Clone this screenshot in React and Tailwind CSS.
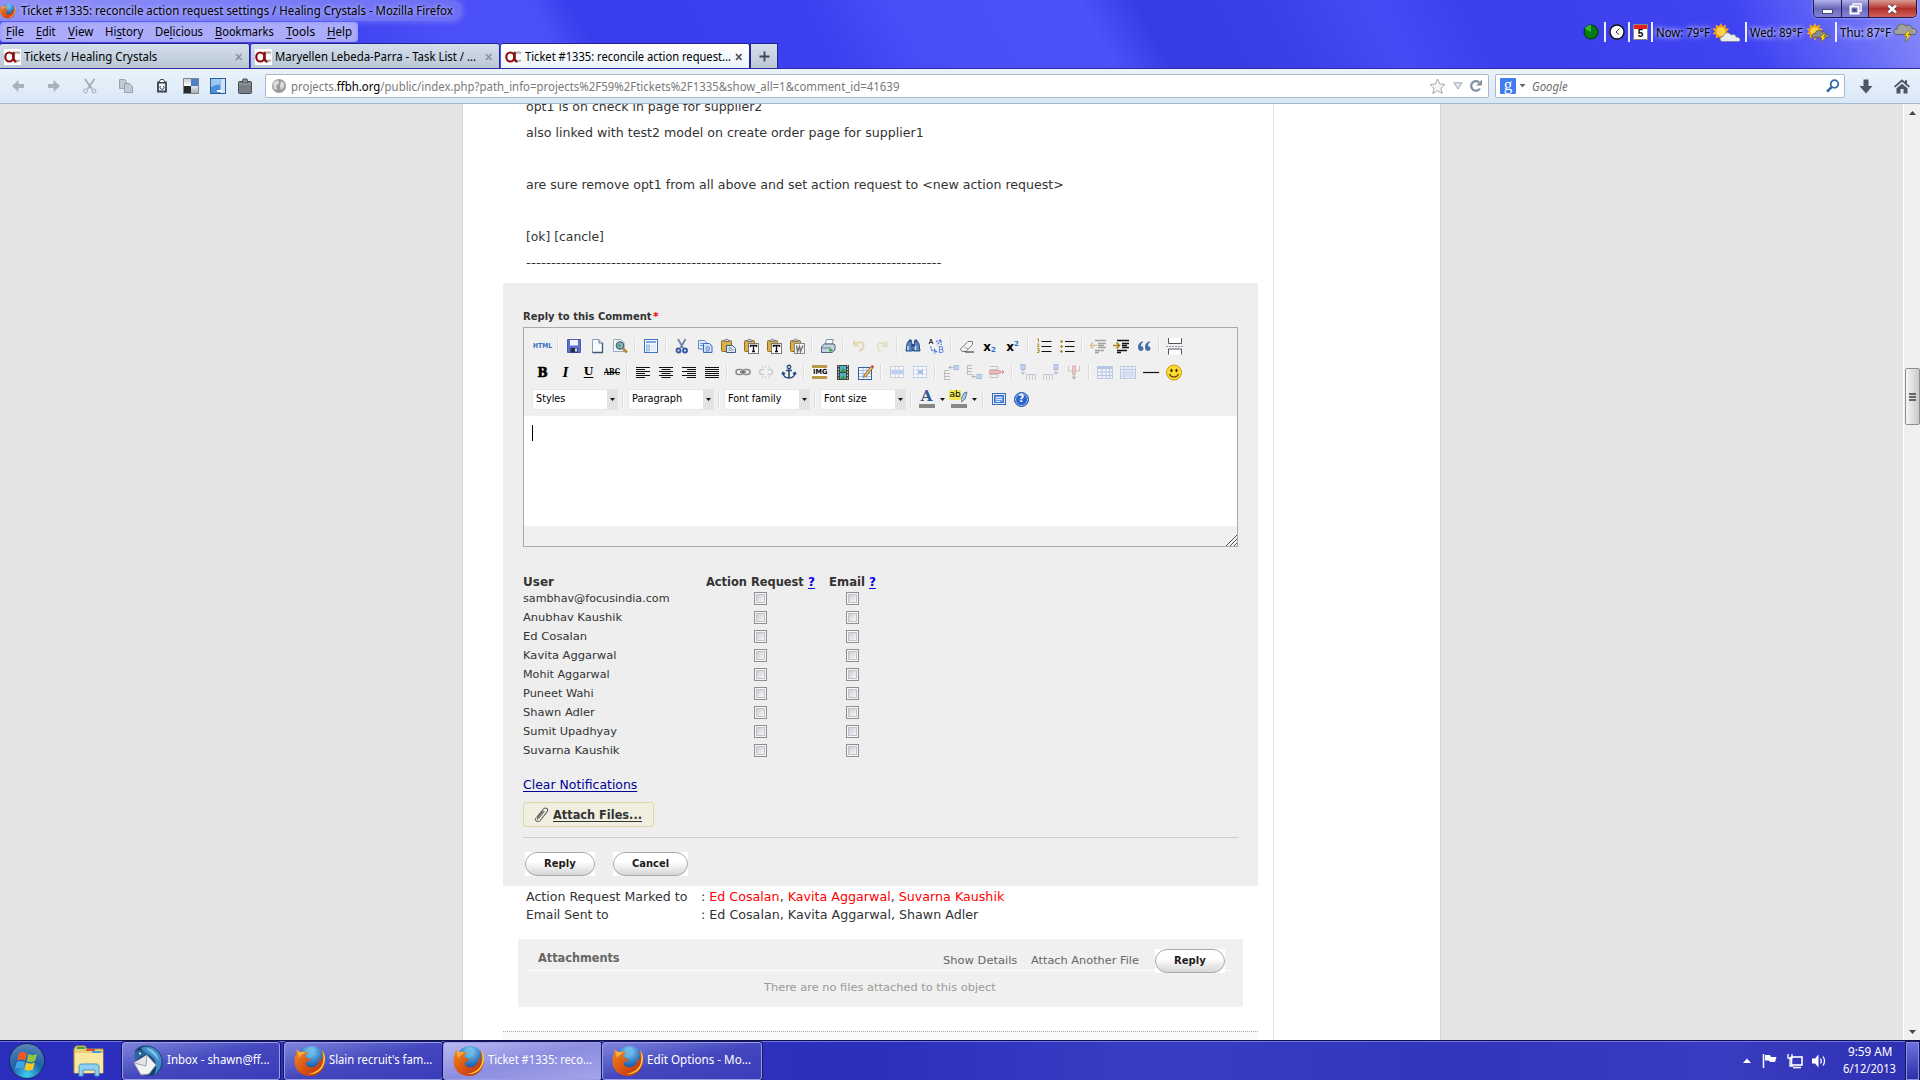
import { useLayoutEffect, useRef, useState } from "react";

// Text squeezed or stretched horizontally to fill the width its class gives.
function Fit({ className = "", inner: innerClass = "", children }) {
  const outer = useRef(null);
  const inner = useRef(null);
  const [scale, setScale] = useState(1);
  useLayoutEffect(() => {
    setScale(outer.current.clientWidth / inner.current.offsetWidth);
  }, []);
  return (
    <span ref={outer} className={"inline-block shrink-0 whitespace-nowrap " + className}>
      <span ref={inner} className={"inline-block origin-left " + innerClass} style={{ transform: `scaleX(${scale})` }}>
        {children}
      </span>
    </span>
  );
}

const SEGOE = "font-['Noto_Sans','Open_Sans',sans-serif]";
const VERDANA = "font-['DejaVu_Sans',sans-serif]";

function Svg({ w = 16, h = 16, className = "", children }) {
  return (
    <svg width={w} height={h} viewBox={`0 0 ${w} ${h}`} className={"shrink-0 " + className} fill="none">
      {children}
    </svg>
  );
}

function FirefoxIcon({ size }) {
  return (
    <svg width={size} height={size} viewBox="0 0 32 32" className="shrink-0">
      <defs>
        <radialGradient id="ffGlobe" cx="0.5" cy="0.2" r="0.8">
          <stop offset="0" stopColor="#8fd3f5" />
          <stop offset="0.5" stopColor="#2f7fc8" />
          <stop offset="1" stopColor="#12306e" />
        </radialGradient>
        <linearGradient id="ffFox" x1="0" y1="0" x2="1" y2="1">
          <stop offset="0" stopColor="#f08a24" />
          <stop offset="0.5" stopColor="#dc5414" />
          <stop offset="1" stopColor="#b5300f" />
        </linearGradient>
      </defs>
      <circle cx="17" cy="14.5" r="13.500" fill="url(#ffGlobe)" />
      <path d="M14 5c3-1 5 0 6 2l-3 2 1 3-4 1z" fill="#5fb4e4" opacity=".8" />
      <path d="M3 4c1 2 2 3 4 3 3-1 6 0 7 1-2 1-3 2-3 4l5 2c0 2-2 3-4 3-1 4 3 6 7 5 5-1 7-5 6-10 2 2 2 4 2 5 2-4 1-9-1-12 6 5 6 14 2 20-4 6-13 8-20 4C0 25-1 15 2 9z" fill="url(#ffFox)" />
      <path d="M28 5c3 4 4 9 2 14-2 7-9 11-16 10 8-1 14-6 15-12 1-4 0-9-1-12z" fill="#fbd13c" />
      <path d="M3 4c1 2 2 3 4 3 2 0 4 0 6 1-3 0-6 2-8 5z" fill="#fbb040" />
    </svg>
  );
}

function OcIcon() {
  return (
    <span className="flex h-[16px] w-[17px] shrink-0 items-center bg-white">
      <svg width="17" height="12" viewBox="0 0 17 12" fill="none">
        <path d="M16 2.300C13 .3 9.300 2 9.300 5.500c0 4 3.500 5.800 6.700 3.700" stroke="#b5afaf" strokeWidth="2.200" />
        <path d="M9.600 .8V7.500c0 2 1 3.200 2.800 3.200" stroke="#8e1010" strokeWidth="2.200" />
        <ellipse cx="5.300" cy="6" rx="4" ry="4.500" stroke="#8e1010" strokeWidth="2.200" />
      </svg>
    </span>
  );
}

function WindowButtons() {
  return (
    <div className="mr-[3px] flex h-[18px] w-[104px] overflow-hidden rounded-b-[5px] border border-t-0 border-[#1a1c55] shadow-[0_0_2px_#ffffffaa]">
      <div className="flex w-[28px] items-center justify-center border-r border-[#1a1c55] bg-linear-to-b from-[#b4b2ea] via-[#6a68b8] to-[#8482d8]">
        <Svg w={13} h={14}><rect x="1.500" y="7.500" width="10" height="4" fill="#fff" stroke="#444a7a" /></Svg>
      </div>
      <div className="flex w-[27px] items-center justify-center border-r border-[#1a1c55] bg-linear-to-b from-[#b4b2ea] via-[#6a68b8] to-[#8482d8]">
        <Svg w={13} h={14}>
          <rect x="4" y="2" width="8" height="7" fill="#6a68b8" stroke="#fff" strokeWidth="1.500" />
          <rect x="1.500" y="4.500" width="8" height="7" fill="#6a68b8" stroke="#fff" strokeWidth="2" />
          <rect x="4.500" y="7" width="2" height="2" fill="#333a6a" />
        </Svg>
      </div>
      <div className="flex flex-1 items-center justify-center bg-linear-to-b from-[#d99a96] via-[#b5302a] to-[#d0605a]">
        <Svg w={13} h={14}>
          <path d="M2.500 3.500l7.500 7M10 3.500l-7.500 7" stroke="#54343f" strokeWidth="4.200" />
          <path d="M2.500 3.500l7.500 7M10 3.500l-7.500 7" stroke="#fff" strokeWidth="2.600" />
        </Svg>
      </div>
    </div>
  );
}

function Sun() {
  return (
    <>
      <path d="M9 0l1.500 3.300L14 1.500l-.7 3.800 3.900.4-2.600 2.800 2.900 2.400-3.700.9 1 3.700-3.600-1.400L9 17.500l-2-3.400-3.500 1.500.7-3.800L.5 11l2.700-2.600L.3 5.500l3.900-.3L3.500 1.500 7 3.300z" fill="#f9a51a" />
      <circle cx="9" cy="8.500" r="5" fill="#fdd640" stroke="#f07d10" strokeWidth=".8" />
    </>
  );
}

function Forecast() {
  const bar = "mx-[3px] h-[20px] w-[2px] bg-white/90";
  const glow = "mt-[1px] text-[12px] text-black [text-shadow:0_0_5px_#fff,0_0_8px_#ffffffaa]";
  return (
    <div className="mr-[2px] flex h-[20px] items-center">
      <Svg w={16} h={16} className="mr-[2px]">
        <circle cx="8" cy="8" r="7.300" fill="#087a12" />
        <circle cx="8" cy="8" r="7" stroke="#022f06" />
        <path d="M8 8V1a7 7 0 0 0-6 4z" fill="#35b83d" />
      </Svg>
      <span className={bar} />
      <Svg w={16} h={16}>
        <circle cx="8" cy="8" r="7" fill="#fff" stroke="#111" strokeWidth="1.400" />
        <path d="M10.500 4.500L7 8l3 2.500" stroke="#333" />
      </Svg>
      <span className={bar} />
      <span className="flex h-[16px] w-[15px] flex-col border border-[#888] bg-white">
        <span className="h-[4px] bg-[#e3201b]" />
        <span className="text-center text-[10px] leading-[10px] font-bold font-['Liberation_Sans',sans-serif]">5</span>
      </span>
      <span className="mr-[3px] ml-[3px] h-[20px] w-[2px] bg-white/90" />
      <Fit className={"w-[54px] " + glow}>Now: 79°F</Fit>
      <Svg w={29} h={19} className="ml-[2px]">
        <Sun />
        <path d="M10 18.500c-3-1-2-5 1-5 1-4 6-5 8-1.500 3-1.500 5 .5 5 2 4 0 5 3 3 4.500z" fill="#e8ebef" stroke="#7b8088" strokeWidth=".8" />
      </Svg>
      <span className="mr-[3px] ml-[4px] h-[20px] w-[2px] bg-white/90" />
      <Fit className={"w-[53px] " + glow}>Wed: 89°F</Fit>
      <Svg w={25} h={19} className="ml-[3px]">
        <Sun />
        <path d="M7 14.500c-2-1-1-4 2-4 1-4 6-4 7-1.500 3-1 4 .5 4 2 4 0 4.500 2.500 2.500 3.500z" fill="#8b8b8b" stroke="#4c4c4c" strokeWidth=".8" />
        <path d="M17 11l-3 4h2l-1 4 5-5h-2.500l2-3z" fill="#ffe21f" stroke="#7c6500" strokeWidth=".6" />
      </Svg>
      <span className="mr-[3px] ml-[4px] h-[20px] w-[2px] bg-white/90" />
      <Fit className={"w-[51px] " + glow}>Thu: 87°F</Fit>
      <Svg w={25} h={19} className="ml-[2px]">
        <path d="M3 11.500C0 10.500 0 6 4 6c0-5 6-6.500 9-3 3-2 6 0 6 2.500 5-.5 6 4.500 3 6z" fill="#a0a0a0" stroke="#5a5a5a" strokeWidth=".9" />
        <path d="M15 8l-4 5h3l-2 6 6-7h-3l2.500-4z" fill="#ffe21f" stroke="#7c6500" strokeWidth=".6" />
      </Svg>
    </div>
  );
}

const MENU = [
  ["", "F", "ile", "w-[18px]"],
  ["", "E", "dit", "w-[20px]"],
  ["", "V", "iew", "w-[25px]"],
  ["Hi", "s", "tory", "w-[38px]"],
  ["De", "l", "icious", "w-[48px]"],
  ["", "B", "ookmarks", "w-[59px]"],
  ["", "T", "ools", "w-[29px]"],
  ["", "H", "elp", "w-[25px]"],
];

function Tab({ active, width, textWidth, label }) {
  return (
    <div
      className={
        "mr-[2px] flex h-[26px] items-center rounded-t-[2px] pl-[4px] shadow-[0_-1px_0_#22248a,1px_0_0_#22248a] " +
        width + " " +
        (active ? "bg-linear-to-b from-white to-[#eaf3fb]" : "border-b border-[#6d7f95] bg-linear-to-b from-[#d3dfeb] to-[#b9c6d4]")
      }
    >
      <OcIcon />
      <Fit className={"ml-[3px] text-[12px] text-black " + textWidth}>{label}</Fit>
      <Svg w={8} h={8} className="mr-[6px] ml-auto">
        <path d="M1 1l5.500 6M6.500 1L1 7" stroke={active ? "#4a4f57" : "#8b939d"} strokeWidth="1.700" />
      </Svg>
    </div>
  );
}

function TopChrome() {
  return (
    <div className="h-[69px] overflow-hidden border-b border-[#2a2c9c] bg-[linear-gradient(62deg,#3c40ee_0%,#3f43f0_18%,#4c50f8_24%,#4a4ff6_29%,#383cec_31%,#3c40f0_43%,#484df8_47%,#4d51f8_57%,#373be2_60%,#3a3ee8_66%,#474bf6_72%,#3a3eec_77%,#3f43f2_90%,#6a6ef8_96%,#8a8cf8_100%)]">
      <div className="flex h-[22px] items-start">
        <div className="flex h-[21px] w-[462px] items-center rounded-r-[10px] bg-linear-to-r from-[#8f90f6] to-[#6a6df4] shadow-[0_0_5px_2px_#7376f5aa]">
          <FirefoxIcon size={16} />
          <Fit className="mt-[1px] ml-[5px] w-[432px] text-[12.500px] text-black [text-shadow:0_0_6px_#ffffffcc]">Ticket #1335: reconcile action request settings / Healing Crystals - Mozilla Firefox</Fit>
        </div>
        <div className="ml-auto">
          <WindowButtons />
        </div>
      </div>
      <div className="flex h-[20px]">
        <div className="relative flex h-[20px] w-[358px] items-center gap-[12px] rounded-[4px] bg-[#acadfa] pl-[6px] shadow-[inset_0_0_4px_#8f91f8]">
          {MENU.map(([a, u, b, w]) => (
            <Fit key={u + b} className={"text-[12px] text-black " + w}>
              {a}<span className="underline underline-offset-2">{u}</span>{b}
            </Fit>
          ))}
        </div>
        <div className="ml-auto">
          <Forecast />
        </div>
      </div>
      <div className="mt-[2px] flex h-[25px]">
        <Tab width="w-[249px]" textWidth="w-[133px]" label="Tickets / Healing Crystals" />
        <Tab width="w-[248px]" textWidth="w-[201px]" label="Maryellen Lebeda-Parra - Task List / ..." />
        <Tab active width="w-[248px]" textWidth="w-[206px]" label="Ticket #1335: reconcile action request..." />
        <div className="flex h-[25px] w-[26px] items-center justify-center bg-linear-to-b from-[#d3dfeb] to-[#b9c6d4] shadow-[0_0_0_1px_#22248a]">
          <Svg w={11} h={11}><path d="M5.500 .5v10M.5 5.500h10" stroke="#3d4754" strokeWidth="1.800" /></Svg>
        </div>
      </div>
    </div>
  );
}

function NavBar() {
  return (
    <div className="flex h-[35px] items-center border-b border-[#a3bace] bg-linear-to-b from-[#eaf3fb] to-[#d9e8f6]">
      <div className="flex w-[265px] items-center">
        <Svg className="ml-[10px]"><path d="M8.500 2L2 8l6.500 6v-4H14V6H8.500z" fill="#a9b2bb" /></Svg>
        <Svg className="ml-[20px]"><path d="M7.500 2L14 8l-6.500 6v-4H2V6h5.500z" fill="#a9b2bb" /></Svg>
        <Svg className="ml-[20px]">
          <path d="M3 1l7 10M12.500 1l-7 10" stroke="#a3abb3" strokeWidth="1.700" />
          <circle cx="3.500" cy="13" r="2" stroke="#a3abb3" /><circle cx="12" cy="13" r="2" stroke="#a3abb3" />
        </Svg>
        <Svg className="ml-[20px]">
          <path d="M1.500 1.500h5l2 2v7h-7z" fill="#c3cad1" stroke="#9aa3ac" />
          <path d="M6.500 5.500h5l3 3v6h-8z" fill="#c3cad1" stroke="#9aa3ac" />
        </Svg>
        <Svg className="ml-[20px]">
          <path d="M4 4.500v9h8v-9z" fill="#f2f6fa" stroke="#39434c" strokeWidth="1.800" />
          <path d="M5 4.500L6.500 1.500h3L11 4.500z" fill="#fff" stroke="#39434c" />
          <path d="M6.500 8a2 2 0 1 0 3 0" stroke="#39434c" />
        </Svg>
        <span className="ml-[13px] grid h-[16px] w-[16px] grid-cols-2 border border-[#7d8791]">
          <span className="bg-linear-to-b from-[#c9ced4] to-white" /><span className="bg-[#4f7fc4]" /><span className="bg-[#26292d]" /><span className="bg-linear-to-b from-[#e4e7ea] to-[#a9aeb4]" />
        </span>
        <Svg className="ml-[11px]">
          <rect x=".5" y=".5" width="15" height="15" fill="#4a90d9" stroke="#2b5f9c" />
          <rect x="10.500" y="1" width="4.500" height="14" fill="#cfe2f5" />
          <path d="M1 1h9.500v6C7 6 4 8 1 9z" fill="#9cc8f2" />
          <rect x="7" y="12" width="5" height="2" fill="#fff" />
        </Svg>
        <Svg className="ml-[11px]">
          <rect x="1.500" y="3.500" width="13" height="12" rx="1" fill="#7a7f85" stroke="#474d54" />
          <path d="M5 5L6 1h4l1 4z" fill="#888f96" stroke="#474d54" />
          <path d="M2 6h12" stroke="#a5abb1" />
        </Svg>
      </div>
      <div className="flex h-[24px] w-[1224px] items-center rounded-[2px] border border-[#a7b9cb] bg-white">
        <Svg w={16} h={16} className="ml-[5px]">
          <circle cx="8" cy="8" r="7" fill="#9b9b9b" />
          <path d="M3 4l4-2 1 3-3 3 1 3-2 1C2 10 2 6 3 4zM10 3l3 2v4l-3 3-1-4z" fill="#dcdcdc" />
        </Svg>
        <Fit className="mt-[2px] ml-[4px] w-[608px] text-[12px] text-[#7a7a7a]">
          projects.<span className="text-black">ffbh.org</span>/public/index.php?path_info=projects%2F59%2Ftickets%2F1335&amp;show_all=1&amp;comment_id=41639
        </Fit>
        <Svg w={17} h={17} className="ml-auto"><path d="M8.500 1l2.200 5 5.300.5-4 3.600 1.200 5.400-4.700-2.800-4.700 2.800L5 10.100 1 6.500 6.300 6z" fill="#f4f4f4" stroke="#a9a9a9" /></Svg>
        <Svg w={10} h={8} className="ml-[7px]"><path d="M.8 .8h8.400L5 7z" fill="#dfe4e9" stroke="#a3adb8" /></Svg>
        <Svg w={14} h={14} className="mr-[5px] ml-[6px]">
          <path d="M11 9.500A4.800 4.800 0 1 1 10 3.200" stroke="#8391a0" strokeWidth="2.300" />
          <path d="M13 .5v6H7z" fill="#8391a0" />
        </Svg>
      </div>
      <div className="ml-[6px] flex h-[24px] w-[350px] items-center rounded-[2px] border border-[#a7b9cb] bg-white">
        <span className="ml-[4px] flex h-[16px] w-[16px] items-center justify-center rounded-[1px] bg-[#3f7cf0] pb-[3px] text-[17px] leading-[14px] text-white font-['Liberation_Serif',serif]">g</span>
        <Svg w={7} h={4} className="ml-[3px]"><path d="M.5 0h6L3.500 3.500z" fill="#666" /></Svg>
        <Fit className="mt-[2px] ml-[6px] w-[36px] text-[12px] text-[#6d6d6d] italic">Google</Fit>
        <Svg w={14} h={14} className="mr-[4px] ml-auto">
          <circle cx="8.500" cy="5" r="3.800" stroke="#336ba8" strokeWidth="1.800" />
          <path d="M5.700 8L1 12.700" stroke="#336ba8" strokeWidth="2.600" />
        </Svg>
      </div>
      <Svg w={14} h={15} className="ml-[14px]"><path d="M4.500 .5h5V7h4L7 14.500 .5 7h4z" fill="#4b5663" /></Svg>
      <Svg w={16} h={15} className="ml-[21px]">
        <path d="M8 .3L0 7.300l1.200 1.200L8 2.800l6.800 5.700L16 7.300 13 4.800V1.300h-2v1.700z" fill="#4b5663" />
        <path d="M2.500 9.300L8 4.700l5.500 4.600v5.200h-4V10h-3v4.500h-4z" fill="#4b5663" />
      </Svg>
    </div>
  );
}

/* ---------- editor icons ---------- */

const clipboard = (
  <>
    <rect x="1.500" y="2.500" width="10" height="11" rx="1" fill="#d9b048" stroke="#8f6e1e" />
    <path d="M4 3.500c0-3 5-3 5 0z" fill="#c9ced6" stroke="#70757e" />
  </>
);

const ICONS = {
  save: (<><path d="M1.500 1.500h13v13h-13z" fill="#5a6fd0" stroke="#4a5cb4" /><rect x="4" y="2" width="8" height="5.500" fill="#f1f3fb" /><rect x="4.500" y="10" width="7" height="4.500" fill="#262b48" /><rect x="9" y="10.500" width="2" height="3" fill="#dde" /></>),
  page: (<><path d="M3.500 1.500h6.500l3.500 3.500v9.500h-10z" fill="#f8fbff" stroke="#8ea0b5" /><path d="M13.500 5v9.500h-10" stroke="#3d5579" strokeWidth="1.300" /><path d="M10 1.500V5h3.500" fill="#dfe8f3" stroke="#5c7190" /></>),
  preview: (<><path d="M1.500 1.500h7.500l3 3v9h-10.500z" fill="#f4f7fb" stroke="#9ba8b8" /><circle cx="8" cy="7.500" r="3.700" fill="#7db8c5" stroke="#50606e" strokeWidth="1.300" /><path d="M6 6l3 1-2 3z" fill="#4b9a51" /><path d="M11 10.500l4 4" stroke="#b98a3d" strokeWidth="2.600" /></>),
  template: (<><rect x="1.500" y="1.500" width="13" height="13" fill="#f5f9ff" stroke="#3f72b8" /><rect x="3" y="3" width="10" height="2" fill="#7ea6dd" /><rect x="3.500" y="7" width="3" height="6" fill="#bdd3f2" stroke="#7ea6dd" strokeWidth=".7" /><rect x="8" y="6.500" width="5" height="6.500" fill="#dfeafa" /></>),
  cut: (<><path d="M4 1l5 9M11.500 1l-5 9" stroke="#6f87a5" strokeWidth="1.800" /><circle cx="4.500" cy="12.500" r="2" stroke="#2f56a5" strokeWidth="1.800" /><circle cx="11" cy="12.500" r="2" stroke="#2f56a5" strokeWidth="1.800" /></>),
  copy: (<><path d="M1.500 2.500h6l2 2v6.500h-8z" fill="#e2edfc" stroke="#5b85c6" /><path d="M3 5.500h4M3 7.500h4" stroke="#6c94d2" /><path d="M6.500 5.500h6l2.500 2.500v6.500H6.500z" fill="#d6e5fb" stroke="#3b67b5" /><path d="M8.500 9h4.500M8.500 11h4.500M8.500 13h4" stroke="#5680c8" /></>),
  paste: (<>{clipboard}<path d="M6.500 7.500h6l3 3v4h-9z" fill="#dfe7f1" stroke="#3f5a80" /><path d="M8.500 10h3M8.500 12h5" stroke="#7088a8" /></>),
  pasteT: (<>{clipboard}<rect x="5.500" y="5.500" width="10" height="10" fill="#fff" stroke="#7a7a7a" /><path d="M7.500 9V7.500h6V9M10.500 7.500V13.500M9 13.500h3" stroke="#111" strokeWidth="1.400" /></>),
  pasteW: (<>{clipboard}<rect x="5.500" y="5.500" width="10" height="10" fill="#f4f4f4" stroke="#8a8a8a" /><path d="M7.500 7.500l1 6 2-5 1 5 2.500-6" stroke="#777" strokeWidth="1.500" /></>),
  print: (<><path d="M5 6l1.500-4.500h7L12 6z" fill="#f8fbff" stroke="#8493a8" /><path d="M1.500 8.500l3-2.500h9.500l1 1v5l-3 2.500H1.500z" fill="#c5d2df" stroke="#54677f" /><path d="M2 10h9" stroke="#6a7e98" /><rect x="9" y="11" width="3.500" height="2.500" fill="#35b24a" /></>),
  undo: (<path d="M3 2.500v5h5M3.500 7C6 3 13 3.500 12.500 8c-.3 3-2.500 4.500-4 5.500" stroke="#e3d9b8" strokeWidth="2.200" />),
  redo: (<path d="M12.500 3v5h-5M12 7.500C10 4 3 4 3.500 8.500c.2 2.500 1.500 4 3 5" stroke="#e6dfc8" strokeWidth="2.200" />),
  find: (<><path d="M3.500 3h3l1 10H1l1-7zM9.500 3h3L14 6l1 7H8.500z" fill="#5d86c0" stroke="#274c86" /><rect x="4" y="1.500" width="2.500" height="2" fill="#274c86" /><rect x="9.500" y="1.500" width="2.500" height="2" fill="#274c86" /><rect x="6.500" y="6" width="3" height="3" fill="#274c86" /><path d="M3 8v4M10.500 8v4" stroke="#d4e2f5" strokeWidth="1.500" /></>),
  replace: (<><path d="M1 6L3 1l2 5M1.800 4.500h2.500" stroke="#333" /><path d="M8 3.500l5-1.500v5M13 2l-4 5M2.500 8.500l1.500 4 4 1M6 11l2.500 2.500L6 15.500" stroke="#4673e0" strokeWidth="1.300" strokeDasharray="2 1" /><path d="M11.500 8.500v6h2c2 0 2-3 0-3h-2 2c1.500 0 1.500-3 0-3z" stroke="#6a92ea" strokeWidth="1.200" /></>),
  eraser: (<><path d="M1.500 11L9 3.500h4.500v3L7 13.500H3z" fill="#f5f5f5" stroke="#777" /><path d="M5 9.500l4 1" stroke="#aaa" /><path d="M6 14h9" stroke="#222" /></>),
  ol: (<><path d="M5.500 3.500h10M5.500 8.500h10M5.500 13.500h10" stroke="#111" /><path d="M1 1h1.500v3M1 6h2l-1.500 2.500H3.500M1 10.500h2v4H1M1.500 12.500H3" stroke="#b08b2c" /></>),
  ul: (<><path d="M6 3.500h9.500M6 8.500h9.500M6 13.500h9.500" stroke="#111" /><path d="M1 3.500h3M2.500 2v3M1 8.500h3M2.500 7v3M1 13.500h3M2.500 12v3" stroke="#b08b2c" strokeWidth="1.200" /></>),
  outdent: (<><path d="M5 2.500h11M8 5.500h8M8 7.500h6M8 9.500h8M5 12.500h9M5 14.500h4" stroke="#a3a3a3" strokeWidth="1.400" /><path d="M0 7.500h7M3 4.500l-3 3 3 3" stroke="#d8c18a" strokeWidth="1.500" /></>),
  indent: (<><path d="M4 2.500h12M9 5.500h7M9 7.500h5M9 9.500h7M4 12.500h10M4 14.500h4" stroke="#111" strokeWidth="1.500" /><path d="M0 7.500h6M3.500 4.500l3 3-3 3" stroke="#a8801d" strokeWidth="1.600" /></>),
  quote: (<path d="M7 3.500C4 3.500 2 6 2 9c0 2.500 1 4 3 4 1.500 0 2.500-1 2.500-2.500S6.500 8 5 8c0-2 .8-3 2-3.500zM14 3.500C11 3.500 9 6 9 9c0 2.500 1 4 3 4 1.500 0 2.500-1 2.500-2.500S13.500 8 12 8c0-2 .8-3 2-3.500z" fill="#4a6fa8" />),
  pagebreak: (<><path d="M2.500 0v5.500h13V0M2.500 16.500V11h13v5.500" fill="#fff" stroke="#555" /><path d="M0 8.500h18" stroke="#7f96ad" strokeDasharray="2 1" /></>),
  left: (<path d="M1 3.500h14M1 5.500h9M1 7.500h14M1 9.500h9M1 11.500h14M1 13.500h9" stroke="#111" />),
  center: (<path d="M1 3.500h14M3.500 5.500h9M1 7.500h14M3.500 9.500h9M1 11.500h14M3.500 13.500h9" stroke="#111" />),
  right: (<path d="M1 3.500h14M6 5.500h9M1 7.500h14M6 9.500h9M1 11.500h14M6 13.500h9" stroke="#111" />),
  full: (<path d="M1 3.500h14M1 5.500h14M1 7.500h14M1 9.500h14M1 11.500h14M1 13.500h14" stroke="#111" />),
  link: (<><rect x="1" y="5.500" width="7" height="5" rx="2.500" stroke="#8d8d8d" strokeWidth="1.600" /><rect x="8" y="5.500" width="7" height="5" rx="2.500" stroke="#8d8d8d" strokeWidth="1.600" /><path d="M5 8h6" stroke="#666" strokeWidth="1.400" /></>),
  unlink: (<><path d="M6 5.500H4a2.500 2.500 0 0 0 0 5h2M9.500 5.500h2.500a2.500 2.500 0 0 1 0 5h-2.500" stroke="#cacaca" strokeWidth="1.600" /><path d="M7.500 1v3M4 1.500l1.500 2.500M11.500 1.500L10 4M7.500 12v3M4 14.500L5.500 12M11.500 14.500L10 12" stroke="#d2d2d2" /></>),
  anchor: (<><circle cx="8" cy="3" r="1.700" stroke="#2c4f80" strokeWidth="1.400" /><path d="M8 5v9M5 6.500h6M2 9c.5 3.500 3 5 6 5s5.500-1.500 6-5M1 10.500L2 8.500l2 1.500M15 10.500l-1-2-2 1.500" stroke="#2c4f80" strokeWidth="1.600" /></>),
  film: (<><rect x="2" y="1" width="12" height="15" fill="#3f4640" /><rect x="5" y="2" width="6" height="6" fill="#4fb0d5" /><rect x="5" y="9" width="6" height="6" fill="#4fb0d5" /><path d="M5 8l3-4 3 4zM5 15l3-4 3 4z" fill="#3f9a3a" /><path d="M3.500 1.500v14M12.500 1.500v14" stroke="#ccc" strokeDasharray="1.500 1.500" /></>),
  edit: (<><rect x=".5" y="3.500" width="13" height="12" fill="#f4f8ff" stroke="#3a5f9a" /><path d="M1 6.500h12M1 9.500h12M1 12.500h12M5 4v11M9 4v11" stroke="#a5bfe3" /><path d="M6 11l7-8.500 2 1.500-7 8.500-2.500 1z" fill="#e7b463" stroke="#8a5a1e" strokeWidth=".7" /><path d="M13 2.500l1-1.500 2 1.500-1 1.500z" fill="#c03028" /></>),
  rowProps: (<><path d="M1.500 2.500h13v11h-13z" fill="#fbfcfe" stroke="#c3cfe2" /><path d="M2 6h12v4H2z" fill="#bdcff0" /><path d="M1.500 6h13M1.500 10h13M6 2v4M10 2v4M6 10v4M10 10v4" stroke="#c9d4e6" /></>),
  cellProps: (<><path d="M1.500 2.500h13v11h-13z" fill="#fbfcfe" stroke="#c3cfe2" /><path d="M1.500 6h13M1.500 10h13M6 2v12M10.500 2v12" stroke="#c9d4e6" /><rect x="6" y="6" width="5" height="4" fill="#aac0ea" /></>),
  rowBefore: (<><path d="M6 6.500H1.500v9H7M1.500 9.500h5.500M1.500 12.500h5.500" stroke="#bcbcbc" /><rect x="11" y="1.500" width="5" height="4" fill="#c4d3ef" stroke="#a9bbdd" /><path d="M10 3.500H6M8 1.500l-2 2 2 2" stroke="#a8b4c8" /></>),
  rowAfter: (<><path d="M1 1.500h5M1 4.500h5M1 7.500h5M1.500 1v9.500H6" stroke="#bcbcbc" /><rect x="11" y="10.500" width="5" height="4" fill="#c4d3ef" stroke="#a9bbdd" /><path d="M10 12.500H6M8 10.500l-2 2 2 2" stroke="#a8b4c8" /></>),
  rowDel: (<><path d="M1 2.500h8v3H1M1 10.500h8v3H1z" stroke="#c4c4c4" /><rect x="0" y="6.500" width="11" height="3" fill="#f0b9b9" stroke="#dda5a5" /><path d="M11 8h4M13 6l2 2-2 2" stroke="#c58d8d" /></>),
  colBefore: (<><rect x="1" y="0.500" width="4" height="5" fill="#c4d3ef" stroke="#a9bbdd" /><path d="M3 6v4M1 8l2 2.500 2-2.500" stroke="#b4bcc8" /><path d="M6.500 16V10.500h9V16M9.500 11v5M12.500 11v5" stroke="#c4cad2" /></>),
  colAfter: (<><rect x="11" y="0.500" width="4" height="5" fill="#c4d3ef" stroke="#a9bbdd" /><path d="M13 6v4M11 8l2 2.500 2-2.500" stroke="#b4bcc8" /><path d="M.5 16V10.500h9V16M3.500 11v5M6.500 11v5" stroke="#c4cad2" /></>),
  colDel: (<><path d="M2.500 2v5h4M13.500 2v5h-4" stroke="#c4c4c4" /><rect x="6.500" y="2" width="3" height="8" fill="#f0c4c4" stroke="#ddb5b5" /><path d="M8 10v5M6 12.500l2 2.500 2-2.500" stroke="#b3a3a3" /></>),
  table: (<><rect x=".5" y="2.500" width="15" height="12" fill="#eef3fb" stroke="#bccae2" /><path d="M1 4h14" stroke="#b3c4e4" strokeWidth="2" /><path d="M1 8h14M1 11.500h14M5 3v11M9 3v11M12.500 3v11" stroke="#b8c7e2" /></>),
  merge: (<><rect x=".5" y="2.500" width="15" height="12" fill="#f2f5fb" stroke="#bccae2" /><path d="M1 5.500h14M4 3v11M8 3v3M12 3v3M1 9h3M1 12h3" stroke="#b8c7e2" /><rect x="5" y="6.500" width="9.500" height="7" fill="#d3dff3" /></>),
  hr: (<path d="M0 8.500h16" stroke="#111" strokeWidth="1.200" />),
  smile: (<><circle cx="8" cy="8.500" r="7.500" fill="#fddc2c" stroke="#c89a10" /><ellipse cx="5.500" cy="6.500" rx="1.100" ry="1.700" fill="#3a2a05" /><ellipse cx="10.500" cy="6.500" rx="1.100" ry="1.700" fill="#3a2a05" /><path d="M3.500 10c1.500 4 7.500 4 9 0" stroke="#5b430c" strokeWidth="1.200" /></>),
  screen: (<><rect x="1.500" y="2.500" width="13" height="11" fill="#e4edfb" stroke="#3b68b4" /><rect x="3.500" y="4.500" width="9" height="7" fill="#6f9ce8" stroke="#3f70c4" /><path d="M5 6.500h6M5 8.500h6M5 10.500h4" stroke="#dce9fd" /></>),
};

const Glyph = ({ name }) => <Svg w={name === "pagebreak" ? 18 : 16} h={17}>{ICONS[name]}</Svg>;
const SERIF = "font-['DejaVu_Serif',serif] ";

function Cell({ name }) {
  let body;
  if (name === "html") body = <Fit className="mt-[1px] w-[19px] text-[7px] font-bold text-[#3a6cc0] font-['DejaVu_Sans',sans-serif]">HTML</Fit>;
  else if (name === "b") body = <span className={SERIF + "mt-[1px] text-[12px] font-black text-black [-webkit-text-stroke:0.6px_black]"}>B</span>;
  else if (name === "i") body = <span className={SERIF + "mt-[1px] text-[12px] font-bold text-black italic"}>I</span>;
  else if (name === "u") body = <span className={SERIF + "mt-[1px] text-[11px] font-bold text-black underline underline-offset-2"}>U</span>;
  else if (name === "abc") body = <Fit className={SERIF + "mt-[1px] w-[16px] text-[9px] font-bold text-black"} inner="line-through">ABC</Fit>;
  else if (name === "sub") body = <span className={VERDANA + " mt-[1px] flex items-end text-[12px] leading-[14px] font-bold text-black"}>x<span className="-mb-[3px] text-[7px] text-[#3a6cd0]">2</span></span>;
  else if (name === "sup") body = <span className={VERDANA + " mt-[1px] flex items-start text-[12px] leading-[14px] font-bold text-black"}>x<span className="-mt-[3px] text-[7px] text-[#3a6cd0]">2</span></span>;
  else if (name === "img")
    body = (
      <span className="flex h-[14px] w-[15px] items-center justify-center border-y-[3px] border-[#b89a45] bg-white">
        <Fit className={VERDANA + " w-[14px] text-[7px] leading-[8px] font-bold text-black"}>IMG</Fit>
      </span>
    );
  else if (name === "help")
    body = (
      <span className="flex h-[15px] w-[15px] items-center justify-center rounded-full border border-[#2a5ab0] bg-[#2f66c8] text-[10px] leading-[12px] font-bold text-white shadow-[inset_0_0_0_1px_#a9c6f3]">?</span>
    );
  else body = <Glyph name={name} />;
  return <span className="flex h-[20px] w-[23px] items-center justify-center">{body}</span>;
}

const Sep = () => <span className="flex h-[20px] w-[8px] items-center justify-center"><span className="h-[16px] w-[2px] border-l border-[#dcdcdc] bg-[#fafafa]" /></span>;

function IconRow({ groups }) {
  return (
    <div className="flex h-[26px] items-center">
      {groups.map((group, i) => (
        <div key={i} className="flex">
          {i > 0 && <Sep />}
          {group.split(" ").map((name, j) => <Cell key={name + j} name={name} />)}
        </div>
      ))}
    </div>
  );
}

const Arrow = ({ className = "" }) => <Svg w={5} h={3} className={className}><path d="M0 0h5L2.500 3z" fill="#111" /></Svg>;

function Select({ label, width }) {
  return (
    <div className="mr-[1px] ml-[1px] flex h-[21px] w-[86px] items-center border border-[#e6e6e6] bg-white pl-[3px]">
      <Fit className={"mt-[1px] text-[11px] text-black font-['DejaVu_Sans',sans-serif] " + width}>{label}</Fit>
      <span className="ml-auto flex h-full w-[10px] items-center justify-center bg-[#e2e2e2]"><Arrow /></span>
    </div>
  );
}

function Editor() {
  return (
    <div className="flex h-[220px] flex-col border border-[#aaa] bg-[#f0f0f0]">
      <div className="flex h-[88px] flex-col pt-[5px] pl-[7px]">
        <IconRow groups={["html", "save page preview", "template", "cut copy paste pasteT pasteT pasteW", "print", "undo redo", "find replace", "eraser sub sup", "ol ul", "outdent indent quote", "pagebreak"]} />
        <IconRow groups={["b i u abc", "left center right full", "link unlink anchor", "img film edit", "rowProps cellProps", "rowBefore rowAfter rowDel", "colBefore colAfter colDel", "table merge hr smile"]} />
        <div className="mt-[1px] flex h-[26px] items-center">
          <Select label="Styles" width="w-[29px]" /><Sep />
          <Select label="Paragraph" width="w-[50px]" /><Sep />
          <Select label="Font family" width="w-[53px]" /><Sep />
          <Select label="Font size" width="w-[43px]" /><Sep />
          <span className="flex w-[23px] flex-col items-center">
            <span className={SERIF + "h-[13px] text-[15px] leading-[13px] font-bold text-[#33588f]"}>A</span>
            <span className="mt-[1px] h-[4px] w-[16px] bg-[#888]" />
          </span>
          <Arrow className="mr-[2px] ml-[2px]" />
          <span className="flex w-[23px] flex-col items-center">
            <span className="flex h-[14px] items-start">
              <span className="h-[10px] bg-[#f3ea55] text-[9px] leading-[8px] text-black">ab</span>
              <Svg w={7} h={13}><path d="M0 9l3-6 3-1-2 7-4 3z" fill="#b9cde6" stroke="#56789f" /></Svg>
            </span>
            <span className="h-[4px] w-[16px] bg-[#888]" />
          </span>
          <Arrow className="mr-[2px] ml-[2px]" />
          <Sep />
          <Cell name="screen" />
          <Cell name="help" />
        </div>
      </div>
      <div className="h-[110px] bg-white pt-[9px] pl-[8px]">
        <div className="h-[16px] w-[1px] bg-black" />
      </div>
      <div className="flex flex-1 items-end justify-end">
        <Svg w={11} h={11}><path d="M0 11L11 0M4 11l7-7M8 11l3-3" stroke="#555" /></Svg>
      </div>
    </div>
  );
}

const USERS = [
  ["sambhav@focusindia.com", "w-[147px]"],
  ["Anubhav Kaushik", "w-[99px]"],
  ["Ed Cosalan", "w-[64px]"],
  ["Kavita Aggarwal", "w-[93px]"],
  ["Mohit Aggarwal", "w-[87px]"],
  ["Puneet Wahi", "w-[71px]"],
  ["Shawn Adler", "w-[72px]"],
  ["Sumit Upadhyay", "w-[94px]"],
  ["Suvarna Kaushik", "w-[97px]"],
];

const Check = () => (
  <span className="flex h-[13px] w-[13px] shrink-0 items-center justify-center border border-[#8e8f8f] bg-[#f6f6f6]">
    <span className="h-[9px] w-[9px] border border-[#c0c4ca] bg-linear-to-br from-[#cbcfd5] to-[#f6f6f6]" />
  </span>
);

function Pill({ label, width, textWidth, className = "" }) {
  return (
    <span className={"block h-[24px] bg-white " + width + " " + className}>
      <span className="flex h-[24px] items-center justify-center rounded-[12px] border border-[#a9a9a9] bg-linear-to-b from-white from-40% to-[#d6d6d6]">
        <Fit className={"mt-[1px] text-[11px] font-bold text-[#1c1c1c] " + textWidth}>{label}</Fit>
      </span>
    </span>
  );
}

function ReplyPanel() {
  return (
    <div className="h-[603px] bg-[#eeeeee] px-[20px]">
      <div className="flex h-[44px] items-end pb-[2px] text-[11px] font-bold text-[#333]">
        <Fit className="w-[129px]">Reply to this Comment</Fit>
        <Fit className="ml-[1px] w-[6px] text-[#ff0000]">*</Fit>
      </div>
      <Editor />
      <div className="mt-[27px] flex h-[15px] items-center text-[12px] leading-[16px] font-bold text-[#333]">
        <Fit className="w-[31px]">User</Fit>
        <Fit className="ml-[152px] w-[98px]">Action Request</Fit>
        <Fit className="ml-[4px] w-[7px] text-[#0000ee]" inner="underline underline-offset-2">?</Fit>
        <Fit className="ml-[14px] w-[36px]">Email</Fit>
        <Fit className="ml-[4px] w-[7px] text-[#0000ee]" inner="underline underline-offset-2">?</Fit>
      </div>
      {USERS.map(([name, w]) => (
        <div key={name} className="flex h-[19px] items-center text-[11px] text-[#333]">
          <span className="mt-[2px] flex w-[231px]"><Fit className={w}>{name}</Fit></span>
          <Check />
          <span className="w-[79px]" />
          <Check />
        </div>
      ))}
      <div className="mt-[15px] flex h-[19px] items-center text-[12px] text-[#000099]">
        <Fit className="w-[114px]" inner="underline underline-offset-2">Clear Notifications</Fit>
      </div>
      <div className="mt-[8px] flex h-[25px] w-[131px] items-center rounded-[3px] border border-[#dcd9a6] bg-[#f1f0e0] pl-[9px]">
        <Svg w={17} h={17}>
          <path d="M3.500 11.500l7-8.500c2-2.200 5.500 0 3.700 2.700l-7 8.800c-2 2.300-6 .2-4.500-2.500M5.500 12.500L11.500 5M5 13.500c-1.500-1 0-2.500.5-3.200L10 4.800" stroke="#666" strokeWidth="1.100" />
        </Svg>
        <Fit className="ml-[3px] w-[89px] text-[12px] font-bold text-[#333]" inner="underline underline-offset-2">Attach Files...</Fit>
      </div>
      <div className="mt-[10px] h-[1px] bg-[#cccccc]" />
      <div className="mt-[14px] flex pl-[2px]">
        <Pill label="Reply" width="w-[70px]" textWidth="w-[32px]" />
        <Pill label="Cancel" width="w-[75px]" textWidth="w-[37px]" className="ml-[18px]" />
      </div>
    </div>
  );
}

function Page() {
  const line = "flex h-[26px] items-center pl-[23px] text-[12.500px] text-[#333]";
  return (
    <div className={"flex h-[936px] overflow-hidden bg-[#e5e3e4] " + VERDANA}>
      <div className="ml-[462px] flex w-[979px] border-x border-[#d9d7d8] bg-white">
        <div className="h-[936px] w-[811px] border-r border-[#e2e2e2] pl-[40px]">
          <div className="w-[755px]">
            <div className="-mt-[10px]">
              <div className={line}><Fit className="w-[236px]">opt1 is on check in page for supplier2</Fit></div>
              <div className={line}><Fit className="w-[398px]">also linked with test2 model on create order page for supplier1</Fit></div>
              <div className={line} />
              <div className={line}><Fit className="w-[538px]">are sure remove opt1 from all above and set action request to &lt;new action request&gt;</Fit></div>
              <div className={line} />
              <div className={line}><Fit className="w-[78px]">[ok] [cancle]</Fit></div>
              <div className={line}><Fit className="w-[415px]">-----------------------------------------------------------------------------------</Fit></div>
            </div>
            <div className="h-[7px]" />
            <ReplyPanel />
            <div className="pt-[2px] pl-[23px] text-[12.500px] text-[#333]">
              <div className="flex h-[18px] items-center">
                <span className="flex w-[175px]"><Fit className="w-[161px]">Action Request Marked to</Fit></span>
                <Fit className="w-[303px]">: <span className="text-[#ff0000]">Ed Cosalan</span>, <span className="text-[#ff0000]">Kavita Aggarwal</span>, <span className="text-[#ff0000]">Suvarna Kaushik</span></Fit>
              </div>
              <div className="flex h-[18px] items-center">
                <span className="flex w-[175px]"><Fit className="w-[83px]">Email Sent to</Fit></span>
                <Fit className="w-[277px]">: Ed Cosalan, Kavita Aggarwal, Shawn Adler</Fit>
              </div>
            </div>
            <div className="mt-[15px] ml-[15px] h-[68px] w-[725px] bg-[#f0f0f0] px-[10px]">
              <div className="flex h-[32px] items-start border-b border-white pl-[10px] text-[#666]">
                <Fit className="mt-[10px] w-[82px] text-[12px] font-bold">Attachments</Fit>
                <Fit className="mt-[14px] ml-[323px] w-[74px] text-[11px]">Show Details</Fit>
                <Fit className="mt-[14px] ml-[14px] w-[108px] text-[11px]">Attach Another File</Fit>
                <Pill label="Reply" width="w-[70px]" textWidth="w-[32px]" className="mt-[10px] ml-[16px]" />
              </div>
              <div className="mt-[9px] flex justify-center pr-[2px] text-[11px] text-[#999]">
                <Fit className="w-[232px]">There are no files attached to this object</Fit>
              </div>
            </div>
            <div className="mt-[24px] h-[9px] border-t border-dotted border-[#aaa] bg-[#f9f9f9]" />
          </div>
        </div>
      </div>
      <div className="ml-auto flex w-[17px] flex-col items-center border-l border-white bg-[#f0f0f0]">
        <Svg w={7} h={4} className="mt-[7px]"><path d="M0 4h7L3.500 0z" fill="#444" /></Svg>
        <div className="mt-[253px] flex h-[57px] w-[15px] flex-col items-center justify-center gap-[1px] rounded-[2px] border border-[#8f8f8f] bg-linear-to-r from-[#f5f5f5] to-[#c9c9cc]">
          <span className="h-[2px] w-[7px] bg-[#666]" /><span className="h-[2px] w-[7px] bg-[#666]" /><span className="h-[2px] w-[7px] bg-[#666]" />
        </div>
        <Svg w={7} h={4} className="mt-auto mb-[6px]"><path d="M0 0h7L3.500 4z" fill="#444" /></Svg>
      </div>
    </div>
  );
}

function TaskButton({ active, width, icon, textWidth, label }) {
  return (
    <div className={"flex h-[38px] items-center rounded-[3px] border border-[#9a9ce6] pl-[9px] shadow-[0_0_0_1px_#15165e] " + width + " " + (active ? "bg-linear-to-br from-[#b9baf0] via-[#8b8de0] to-[#a3a5ea]" : "bg-linear-to-br from-[#8184dc] via-[#4346bd] to-[#3a3db8]")}>
      {icon}
      <Fit className={"-mt-[1px] ml-[3px] text-[12px] text-white " + textWidth}>{label}</Fit>
    </div>
  );
}

function Thunderbird() {
  return (
    <svg width="32" height="32" viewBox="0 0 32 32" className="shrink-0">
      <path d="M3 6C6 1 14-1 21 2c8 4 11 12 9 19-2 6-7 10-13 10L8 26z" fill="#173f6e" />
      <path d="M9 3c7-4 17 0 20 9 2 7-1 14-7 18 3-6 3-12-1-17C17 9 12 8 9 3z" fill="#3f8cc6" />
      <path d="M14 3c7 0 12 6 13 13-3-5-8-8-13-13z" fill="#7fc0e6" />
      <path d="M2 18L15 10l9 10-7 9-8 1z" fill="#f3f4f6" stroke="#8f969f" />
      <path d="M2 18l12 3 1-11" stroke="#9aa1aa" fill="#e2e4e8" />
      <path d="M4 6c4-2 9 0 11 4-4 0-8 2-11 6C2 13 2 9 4 6z" fill="#2c659c" />
      <circle cx="8" cy="8.500" r="1" fill="#fff" />
    </svg>
  );
}

function Taskbar() {
  return (
    <div className="flex h-[40px] items-center border-t border-[#10114f] bg-[linear-gradient(90deg,#2b2ebc_0%,#3033c4_30%,#2c2fba_45%,#393cc4_60%,#3235bd_75%,#393cc0_90%,#2d30b0_100%)] shadow-[inset_0_1px_0_#6f72e0]">
      <svg width="38" height="38" viewBox="0 0 38 38" className="ml-[8px] shrink-0">
        <defs>
          <radialGradient id="orb" cx="0.5" cy="0.9" r="0.9">
            <stop offset="0" stopColor="#3fd0f5" />
            <stop offset="0.5" stopColor="#1c62a8" />
            <stop offset="1" stopColor="#5f87b8" />
          </radialGradient>
        </defs>
        <circle cx="19" cy="19" r="17.500" fill="url(#orb)" stroke="#16235c" />
        <path d="M11 11c3-1.500 5-1 8 .500l-1.800 7c-3-1.500-5-1.500-8 0z" fill="#ee5a24" />
        <path d="M20.500 12c3 1.500 5 1.500 8.500 0l-1.800 7c-3 1.500-5.500 1.500-8.500 0z" fill="#8fc740" />
        <path d="M8.700 20c3-1.500 5-1.500 8 0L15 27c-3-1.500-5-1.500-8 0z" fill="#3fa3e8" />
        <path d="M18.200 20.500c3 1.500 5.500 1.500 8.500 0l-1.800 7c-3 1.500-5.500 1.500-8.500 0z" fill="#fbc622" />
      </svg>
      <svg width="34" height="34" viewBox="0 0 34 34" className="ml-[26px] shrink-0">
        <path d="M2 5l2-3h9l2 3h16v24H2z" fill="#e9cf73" stroke="#b9973a" />
        <path d="M5 4h8" stroke="#3fa34a" strokeWidth="2" />
        <path d="M14 6h9" stroke="#d5533c" strokeWidth="2" />
        <path d="M20 8h9" stroke="#4f9be0" strokeWidth="2" />
        <path d="M3 9h28v20H3z" fill="#f8e7a0" />
        <path d="M7 32V23c0-2 1-3 3-3h14c2 0 3 1 3 3v9h-4v-6H11v6z" fill="#8fd0f0" stroke="#4b93c4" />
      </svg>
      <div className="ml-[16px] flex items-center">
        <TaskButton width="w-[158px]" icon={<Thunderbird />} textWidth="w-[103px]" label="Inbox - shawn@ff..." />
        <span className="w-[4px]" />
        <TaskButton width="w-[159px]" icon={<FirefoxIcon size={32} />} textWidth="w-[103px]" label="Slain recruit's fam..." />
        <TaskButton active width="w-[159px]" icon={<FirefoxIcon size={32} />} textWidth="w-[104px]" label="Ticket #1335: reco..." />
        <TaskButton width="w-[160px]" icon={<FirefoxIcon size={32} />} textWidth="w-[104px]" label="Edit Options - Mo..." />
      </div>
      <div className="ml-auto flex h-full items-center text-white">
        <Svg w={8} h={5}><path d="M0 5h8L4 .5z" fill="#fff" /></Svg>
        <Svg w={16} h={16} className="ml-[11px]"><path d="M1.500 1v14" stroke="#fff" strokeWidth="1.500" /><path d="M3 2h5l1 2h5.500l-1.500 5H8L7 7.500H3z" fill="#fff" /></Svg>
        <Svg w={16} h={16} className="ml-[9px]"><rect x="4.500" y="4" width="10.500" height="8" stroke="#fff" strokeWidth="1.600" /><path d="M6 14.500h8" stroke="#fff" strokeWidth="1.600" /><path d="M1 1v4h4V1M3 5v8h3" stroke="#fff" strokeWidth="1.300" /></Svg>
        <Svg w={16} h={16} className="ml-[8px]"><path d="M1 5.500h3l3.500-4v13L4 10.500H1z" fill="#fff" /><path d="M9.500 5.500c1 1.500 1 3.500 0 5M12 3.500c2 3 2 6 0 9" stroke="#fff" strokeWidth="1.200" /></Svg>
        <div className="-mt-[1px] ml-[16px] flex w-[53px] flex-col items-center text-[12px] leading-[17px]">
          <Fit className="w-[44px]">9:59 AM</Fit>
          <Fit className="w-[53px]">6/12/2013</Fit>
        </div>
        <div className="mr-[1px] ml-[10px] h-[38px] w-[13px] border border-[#8a8ce6] bg-linear-to-b from-[#6d70dc] to-[#2d30a8] shadow-[0_0_0_1px_#15165e]" />
      </div>
    </div>
  );
}

export default function App() {
  return (
    <div className={"h-[1080px] w-[1920px] overflow-hidden " + SEGOE}>
      <TopChrome />
      <NavBar />
      <Page />
      <Taskbar />
    </div>
  );
}
